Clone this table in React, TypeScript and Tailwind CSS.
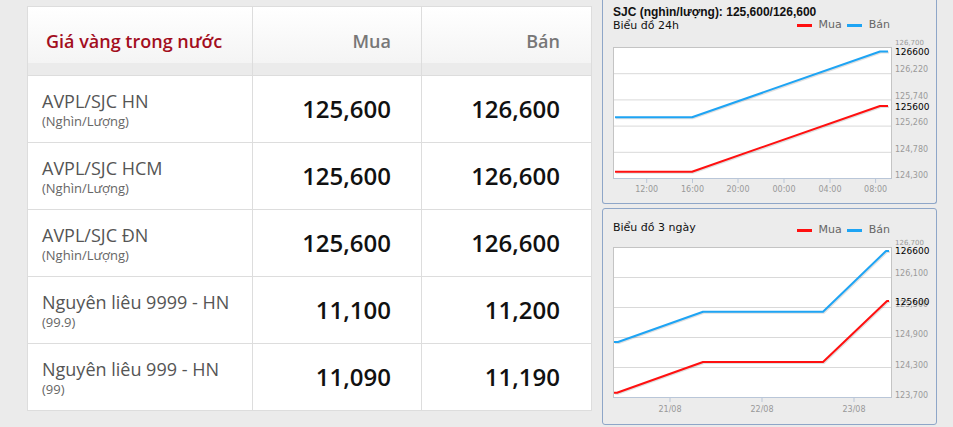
type Row = {
  name: string
  unit: string
  buy: string
  sell: string
}

const rows: Row[] = [
  { name: 'AVPL/SJC HN', unit: '(Nghìn/Lượng)', buy: '125,600', sell: '126,600' },
  { name: 'AVPL/SJC HCM', unit: '(Nghìn/Lượng)', buy: '125,600', sell: '126,600' },
  { name: 'AVPL/SJC ĐN', unit: '(Nghìn/Lượng)', buy: '125,600', sell: '126,600' },
  { name: 'Nguyên liêu 9999 - HN', unit: '(99.9)', buy: '11,100', sell: '11,200' },
  { name: 'Nguyên liêu 999 - HN', unit: '(99)', buy: '11,090', sell: '11,190' },
]

type Pt = [number, number]

type ChartSpec = {
  height: number
  bottom: number
  grid: number[]
  yLabels: { text: string; y: number; small?: boolean }[]
  marks: { text: string; y: number }[]
  ticks: { x: number; label: string }[]
  tickY: number
  mua: Pt[]
  ban: Pt[]
}

const chart24h: ChartSpec = {
  height: 167,
  bottom: 142,
  grid: [11, 37.2, 63.4, 89.6, 115.8, 142],
  yLabels: [
    { text: '126,700', y: 9, small: true },
    { text: '126,220', y: 35.5 },
    { text: '125,740', y: 63 },
    { text: '125,260', y: 89 },
    { text: '124,780', y: 115.5 },
    { text: '124,300', y: 142 },
  ],
  marks: [
    { text: '126600', y: 19 },
    { text: '125600', y: 74 },
  ],
  ticks: [
    { x: 43.7, label: '12:00' },
    { x: 89.5, label: '16:00' },
    { x: 135, label: '20:00' },
    { x: 181, label: '00:00' },
    { x: 227, label: '04:00' },
    { x: 272.6, label: '08:00' },
  ],
  tickY: 156,
  mua: [[12, 135.7], [89, 135.7], [277, 70], [285, 70]],
  ban: [[12, 81.3], [89, 81.3], [277, 15.5], [285, 15.5]],
}

// 125,500 sits under the black 125600 marker, same as the source chart
const chart3d: ChartSpec = {
  height: 187,
  bottom: 161,
  grid: [11, 41, 71, 101, 131, 161],
  yLabels: [
    { text: '126,700', y: 9, small: true },
    { text: '126,100', y: 40 },
    { text: '125,500', y: 70.5 },
    { text: '124,900', y: 100.7 },
    { text: '124,300', y: 131.5 },
    { text: '123,700', y: 161.5 },
  ],
  marks: [
    { text: '126600', y: 18.3 },
    { text: '125600', y: 69 },
  ],
  ticks: [
    { x: 67, label: '21/08' },
    { x: 159, label: '22/08' },
    { x: 251, label: '23/08' },
  ],
  tickY: 175.5,
  mua: [[11, 156.7], [14, 156.7], [100, 126], [220, 126], [284, 65], [286, 65]],
  ban: [[11, 106], [15, 106], [100, 75.7], [220, 75.7], [283, 15], [286, 15]],
}

const toPath = (pts: Pt[]) => pts.map(([x, y], i) => `${i ? 'L' : 'M'}${x} ${y}`).join(' ')

function Chart({ spec }: { spec: ChartSpec }) {
  const top = spec.grid[0]
  return (
    <svg width={333} height={spec.height} className="block" fontFamily="'DejaVu Sans', sans-serif">
      <rect x={10.5} y={top + 0.5} width={278} height={spec.bottom - top} fill="#ffffff" />
      {spec.grid.slice(1, -1).map((y) => (
        <line key={y} x1={10.5} x2={288.5} y1={y + 0.5} y2={y + 0.5} stroke="#d9d9d9" strokeWidth={1} />
      ))}
      <rect x={10.5} y={top + 0.5} width={278} height={spec.bottom - top} fill="none" stroke="#c4c4c4" strokeWidth={1} />
      <line x1={10.5} x2={288.5} y1={spec.bottom + 0.5} y2={spec.bottom + 0.5} stroke="#b9c6d8" strokeWidth={1} />
      {spec.ticks.map((t) => (
        <g key={t.label}>
          <line x1={t.x} x2={t.x} y1={spec.bottom + 1} y2={spec.bottom + 5} stroke="#b9c6d8" strokeWidth={1} />
          <text x={t.x} y={spec.tickY} fontSize={8} fill="#999999" textAnchor="middle">
            {t.label}
          </text>
        </g>
      ))}
      {spec.yLabels.map((l) => (
        <text key={l.text} x={292} y={l.y} fontSize={l.small ? 7 : 8} fill="#9a9a9a">
          {l.text}
        </text>
      ))}
      {spec.marks.map((m) => (
        <text key={m.text} x={292} y={m.y} fontSize={9} fill="#000000">
          {m.text}
        </text>
      ))}
      {[spec.ban, spec.mua].map((pts, i) => (
        <path
          key={`s${i}`}
          d={toPath(pts.map(([x, y]) => [x + 1, y + 1] as Pt))}
          fill="none"
          stroke="#000000"
          strokeOpacity={0.12}
          strokeWidth={2}
        />
      ))}
      <path d={toPath(spec.ban)} fill="none" stroke="#1ea4f4" strokeWidth={2} strokeLinejoin="round" />
      <path d={toPath(spec.mua)} fill="none" stroke="#ff1010" strokeWidth={2} strokeLinejoin="round" />
    </svg>
  )
}

function Legend() {
  return (
    <div className="flex items-center text-[11px] leading-[14px] text-[#666666]">
      <span className="h-[3px] w-[15px] bg-[#ff1010]" />
      <span className="ml-[7px]">Mua</span>
      <span className="ml-[5px] h-[3px] w-[15px] bg-[#1ea4f4]" />
      <span className="ml-[7px]">Bán</span>
    </div>
  )
}

export default function App() {
  return (
    <div className="flex h-[427px] w-[953px] items-start overflow-hidden bg-[#ebebeb] font-['Open_Sans',sans-serif]">
      <div className="ml-[27px] mt-[6px] w-[565px] border border-[#dddddd] bg-white">
        <div className="grid h-[56px] grid-cols-[224px_169px_170px] bg-gradient-to-b from-white to-[#f4f4f4] text-[18px] font-semibold leading-[24px]">
          <div className="pl-[18px] pt-[22px] text-[#a30e1e]">Giá vàng trong nước</div>
          <div className="border-l border-[#dddddd] pr-[30px] pt-[22px] text-right text-[#777777]">Mua</div>
          <div className="border-l border-[#dddddd] pr-[31px] pt-[22px] text-right text-[#777777]">Bán</div>
        </div>
        <div className="grid h-[12px] grid-cols-[224px_169px_170px] bg-[#ebebeb]">
          <div />
          <div className="border-l border-[#dddddd]" />
          <div className="border-l border-[#dddddd]" />
        </div>
        {rows.map((row) => (
          <div
            key={row.name}
            className="grid h-[67px] grid-cols-[224px_169px_170px] border-t border-[#dddddd]"
          >
            <div className="flex flex-col justify-center pl-[14px]">
              <span className="text-[18px] leading-[24px] text-[#555555]">{row.name}</span>
              <span className="text-[13px] leading-[16px] text-[#666666]">{row.unit}</span>
            </div>
            <div className="flex items-center justify-end border-l border-[#dddddd] pr-[30px] text-[24px] font-semibold text-[#111111]">
              {row.buy}
            </div>
            <div className="flex items-center justify-end border-l border-[#dddddd] pr-[31px] text-[24px] font-semibold text-[#111111]">
              {row.sell}
            </div>
          </div>
        ))}
      </div>

      <div className="ml-[10px] flex w-[335px] flex-col">
        <div className="h-[204px] rounded-b-[3px] border-x border-b border-[#8ea6c8] bg-[#ececec]">
          <div className="relative h-[36px] pl-[10px] pt-[5px] font-['DejaVu_Sans',sans-serif]">
            <div className="font-['Liberation_Sans',sans-serif] text-[12px] font-bold leading-[14px] text-[#111111]">
              SJC (nghìn/lượng): 125,600/126,600
            </div>
            <div className="text-[11px] leading-[14px] text-[#111111]">Biểu đồ 24h</div>
            <div className="absolute right-[46px] top-[18px]">
              <Legend />
            </div>
          </div>
          <Chart spec={chart24h} />
        </div>

        <div className="mt-[4px] h-[217px] rounded-[3px] border border-[#8ea6c8] bg-[#ececec]">
          <div className="relative h-[27px] pl-[10px] pt-[12px] font-['DejaVu_Sans',sans-serif]">
            <div className="text-[11px] leading-[14px] text-[#111111]">Biểu đồ 3 ngày</div>
            <div className="absolute right-[46px] top-[14px]">
              <Legend />
            </div>
          </div>
          <Chart spec={chart3d} />
        </div>
      </div>
    </div>
  )
}
